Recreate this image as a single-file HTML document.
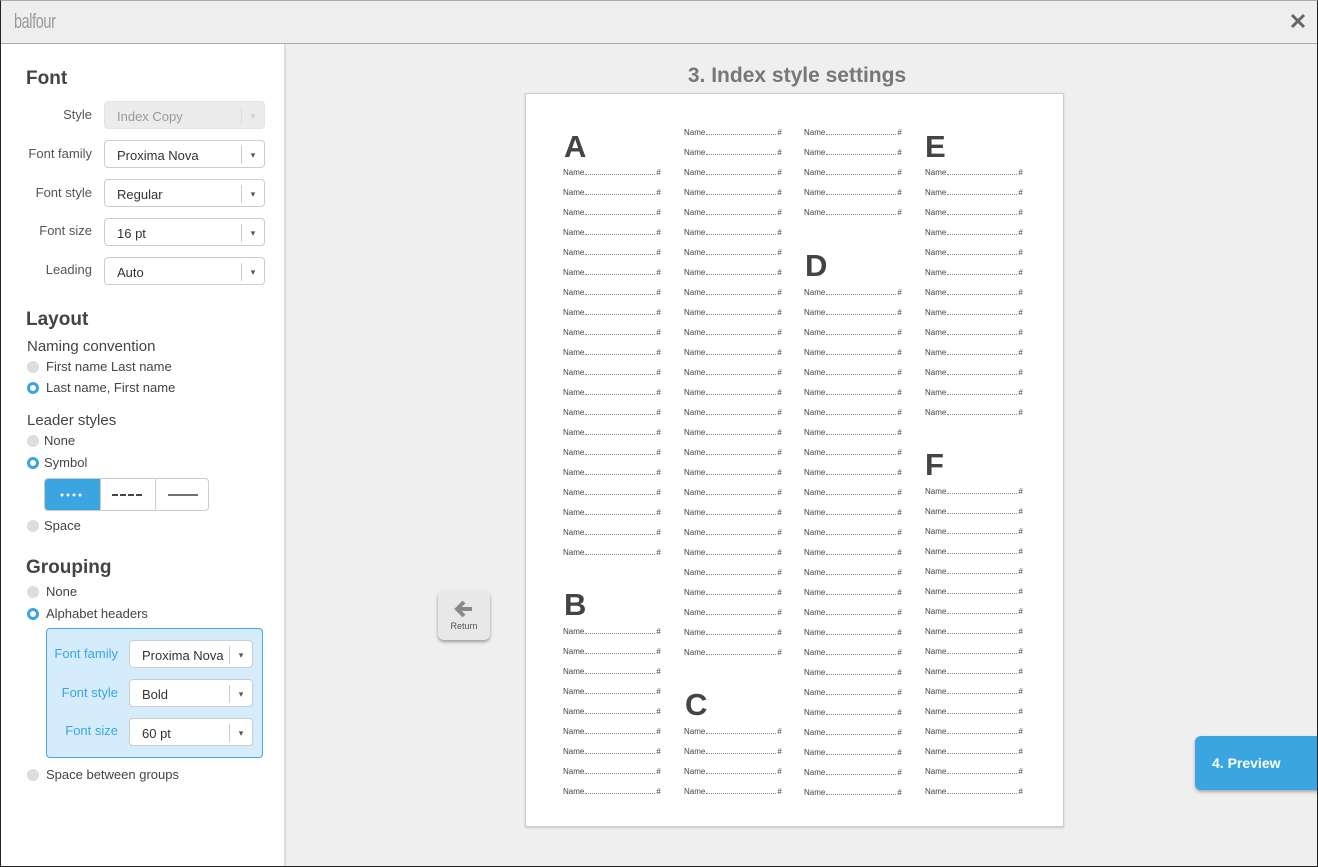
<!DOCTYPE html>
<html><head><meta charset="utf-8"><style>
*{box-sizing:border-box;margin:0;padding:0}
body{width:1318px;height:867px;position:relative;overflow:hidden;background:#efefef;font-family:"Liberation Sans",Arial,sans-serif;color:#444}
.frame{position:absolute;left:0;top:0;width:1318px;height:867px;border:1px solid #222;border-top:1px solid #aaa;pointer-events:none;z-index:10}
.top{position:absolute;left:0;top:0;width:1318px;height:44px;background:#eeeeee;border-bottom:1px solid #aaa}
.logo{position:absolute;left:14px;top:11px;font-size:20px;color:#999;letter-spacing:-0.5px;transform:scaleX(.72);transform-origin:left}
.close{position:absolute;left:1289px;top:12px;width:18px;height:18px}
.side{position:absolute;left:0;top:44px;width:286px;height:823px;background:#fff;border-right:2px solid #ddd}
.h{position:absolute;left:26px;font-size:19px;font-weight:bold;color:#444}
.lbl{position:absolute;right:192px;font-size:13px;color:#555;text-align:right}
.sel{position:absolute;left:104px;width:161px;height:28px;border:1px solid #ccc;border-radius:4px;background:#fff;font-size:13px;color:#333;padding:7px 0 0 12px}
.sel:after{content:"▾";position:absolute;right:0;top:5px;width:22px;height:18px;border-left:1px solid #ccc;font-size:9px;text-align:center;line-height:18px;color:#555}
.sel.dis{background:#ececec;color:#999;border-color:#e4e4e4}
.sel.dis:after{color:#ccc;border-color:#ddd}
.sub{position:absolute;left:27px;font-size:15px;color:#444}
.rad{position:absolute;left:27px;font-size:13px;color:#444;padding-left:19px;line-height:14px}
.rad:before{content:"";position:absolute;left:0;top:1px;width:12px;height:12px;border-radius:50%;background:#ddd}
.rad.on:before{background:#fff;border:3px solid #3aa5e0;width:6px;height:6px}
.seg{position:absolute;left:44px;top:478px;width:165px;height:33px;border:1px solid #ccc;border-radius:4px;display:flex;overflow:hidden}
.seg div{flex:1;border-left:1px solid #ccc;position:relative}
.seg div:first-child{border:0;background:#3aa5e0}
.box{position:absolute;left:46px;top:628px;width:217px;height:130px;background:#d4ecfb;border:1px solid #4aa8e0;border-radius:4px}
.bl{position:absolute;right:144px;font-size:13px;color:#3aa5e0}
.box .sel{left:82px;width:124px}
.title{position:absolute;left:580px;width:434px;top:64px;text-align:center;font-size:21px;font-weight:bold;color:#777}
.page{position:absolute;left:525px;top:93px;width:539px;height:734px;background:#fff;border:1px solid #ccc;box-shadow:0 1px 2px rgba(0,0,0,.15)}
.col{position:absolute;width:100px}
.col p{height:20px;line-height:20px;font-size:8px;color:#444;display:flex;align-items:baseline}
.col p i{border-bottom:1px dotted #888;margin:0 1px;height:1px;flex:none;width:70px}
.L{position:absolute;font-size:31px;font-weight:bold;color:#444;line-height:31px}
.ret{position:absolute;left:438px;top:590px;width:52px;height:50px;background:#e8e8e8;border-radius:6px;box-shadow:0 2px 3px rgba(0,0,0,.35);text-align:center;font-size:9px;color:#555}
.prev{position:absolute;left:1195px;top:736px;width:124px;height:54px;background:#3aa5e0;border-radius:6px 0 0 6px;box-shadow:0 2px 3px rgba(0,0,0,.3);color:#fff;font-weight:bold;font-size:14px;padding:19px 0 0 17px}
</style></head><body>
<div class="top"><div class="logo">balfour</div>
<svg class="close" viewBox="0 0 18 18"><path d="M3 3L15 15M15 3L3 15" stroke="#666" stroke-width="3"/></svg></div>
<div class="side">
<div class="h" style="top:24px">Font</div>
<div class="lbl" style="top:63px">Style</div><div class="sel dis" style="top:57px">Index Copy</div>
<div class="lbl" style="top:102px">Font family</div><div class="sel" style="top:96px">Proxima Nova</div>
<div class="lbl" style="top:141px">Font style</div><div class="sel" style="top:135px">Regular</div>
<div class="lbl" style="top:179px">Font size</div><div class="sel" style="top:174px">16 pt</div>
<div class="lbl" style="top:218px">Leading</div><div class="sel" style="top:213px">Auto</div>
<div class="h" style="top:265px">Layout</div>
<div class="sub" style="top:294px">Naming convention</div>
<div class="rad" style="top:316px">First name Last name</div>
<div class="rad on" style="top:337px">Last name, First name</div>
<div class="sub" style="top:368px">Leader styles</div>
<div class="rad" style="top:390px;padding-left:17px">None</div>
<div class="rad on" style="top:412px;padding-left:17px">Symbol</div>
<div class="rad" style="top:475px;padding-left:17px">Space</div>
<div class="h" style="top:513px">Grouping</div>
<div class="rad" style="top:541px">None</div>
<div class="rad on" style="top:563px">Alphabet headers</div>
<div class="rad" style="top:724px">Space between groups</div>
</div>
<div class="seg"><div><svg width="55" height="31"><g fill="#fff"><circle cx="17" cy="16" r="1.5"/><circle cx="23" cy="16" r="1.5"/><circle cx="29" cy="16" r="1.5"/><circle cx="35" cy="16" r="1.5"/></g></svg></div><div><svg width="54" height="31"><path d="M11 16h32" stroke="#444" stroke-width="2" stroke-dasharray="6 2"/></svg></div><div><svg width="54" height="31"><path d="M12 16h30" stroke="#444" stroke-width="1.5"/></svg></div></div>
<div class="box">
<div class="bl" style="top:17px">Font family</div><div class="sel" style="top:11px">Proxima Nova</div>
<div class="bl" style="top:56px">Font style</div><div class="sel" style="top:50px">Bold</div>
<div class="bl" style="top:94px">Font size</div><div class="sel" style="top:89px">60 pt</div>
</div>
<div class="title">3. Index style settings</div>
<div class="page"></div>
<div class="L" style="left:564px;top:131px">A</div>
<div class="L" style="left:564px;top:589px">B</div>
<div class="L" style="left:685px;top:689px">C</div>
<div class="L" style="left:805px;top:250px">D</div>
<div class="L" style="left:925px;top:131px">E</div>
<div class="L" style="left:925px;top:449px">F</div>
<div class="col" style="left:563px;top:163px">
<p>Name<i></i>#</p><p>Name<i></i>#</p><p>Name<i></i>#</p><p>Name<i></i>#</p><p>Name<i></i>#</p><p>Name<i></i>#</p><p>Name<i></i>#</p><p>Name<i></i>#</p><p>Name<i></i>#</p><p>Name<i></i>#</p><p>Name<i></i>#</p><p>Name<i></i>#</p><p>Name<i></i>#</p><p>Name<i></i>#</p><p>Name<i></i>#</p><p>Name<i></i>#</p><p>Name<i></i>#</p><p>Name<i></i>#</p><p>Name<i></i>#</p><p>Name<i></i>#</p></div>
<div class="col" style="left:563px;top:622px">
<p>Name<i></i>#</p><p>Name<i></i>#</p><p>Name<i></i>#</p><p>Name<i></i>#</p><p>Name<i></i>#</p><p>Name<i></i>#</p><p>Name<i></i>#</p><p>Name<i></i>#</p><p>Name<i></i>#</p></div>
<div class="col" style="left:684px;top:123px">
<p>Name<i></i>#</p><p>Name<i></i>#</p><p>Name<i></i>#</p><p>Name<i></i>#</p><p>Name<i></i>#</p><p>Name<i></i>#</p><p>Name<i></i>#</p><p>Name<i></i>#</p><p>Name<i></i>#</p><p>Name<i></i>#</p><p>Name<i></i>#</p><p>Name<i></i>#</p><p>Name<i></i>#</p><p>Name<i></i>#</p><p>Name<i></i>#</p><p>Name<i></i>#</p><p>Name<i></i>#</p><p>Name<i></i>#</p><p>Name<i></i>#</p><p>Name<i></i>#</p><p>Name<i></i>#</p><p>Name<i></i>#</p><p>Name<i></i>#</p><p>Name<i></i>#</p><p>Name<i></i>#</p><p>Name<i></i>#</p><p>Name<i></i>#</p></div>
<div class="col" style="left:684px;top:722px">
<p>Name<i></i>#</p><p>Name<i></i>#</p><p>Name<i></i>#</p><p>Name<i></i>#</p></div>
<div class="col" style="left:804px;top:123px">
<p>Name<i></i>#</p><p>Name<i></i>#</p><p>Name<i></i>#</p><p>Name<i></i>#</p><p>Name<i></i>#</p></div>
<div class="col" style="left:804px;top:283px">
<p>Name<i></i>#</p><p>Name<i></i>#</p><p>Name<i></i>#</p><p>Name<i></i>#</p><p>Name<i></i>#</p><p>Name<i></i>#</p><p>Name<i></i>#</p><p>Name<i></i>#</p><p>Name<i></i>#</p><p>Name<i></i>#</p><p>Name<i></i>#</p><p>Name<i></i>#</p><p>Name<i></i>#</p><p>Name<i></i>#</p><p>Name<i></i>#</p><p>Name<i></i>#</p><p>Name<i></i>#</p><p>Name<i></i>#</p><p>Name<i></i>#</p><p>Name<i></i>#</p><p>Name<i></i>#</p><p>Name<i></i>#</p><p>Name<i></i>#</p><p>Name<i></i>#</p><p>Name<i></i>#</p><p>Name<i></i>#</p></div>
<div class="col" style="left:925px;top:163px">
<p>Name<i></i>#</p><p>Name<i></i>#</p><p>Name<i></i>#</p><p>Name<i></i>#</p><p>Name<i></i>#</p><p>Name<i></i>#</p><p>Name<i></i>#</p><p>Name<i></i>#</p><p>Name<i></i>#</p><p>Name<i></i>#</p><p>Name<i></i>#</p><p>Name<i></i>#</p><p>Name<i></i>#</p></div>
<div class="col" style="left:925px;top:482px">
<p>Name<i></i>#</p><p>Name<i></i>#</p><p>Name<i></i>#</p><p>Name<i></i>#</p><p>Name<i></i>#</p><p>Name<i></i>#</p><p>Name<i></i>#</p><p>Name<i></i>#</p><p>Name<i></i>#</p><p>Name<i></i>#</p><p>Name<i></i>#</p><p>Name<i></i>#</p><p>Name<i></i>#</p><p>Name<i></i>#</p><p>Name<i></i>#</p><p>Name<i></i>#</p></div>
<div class="ret"><svg width="22" height="20" style="margin-top:9px"><path d="M19 10H5M11 3L4 10L11 17" stroke="#888" stroke-width="4" fill="none"/></svg><div>Return</div></div>
<div class="prev">4. Preview</div>
<div class="frame"></div>
</body></html>
